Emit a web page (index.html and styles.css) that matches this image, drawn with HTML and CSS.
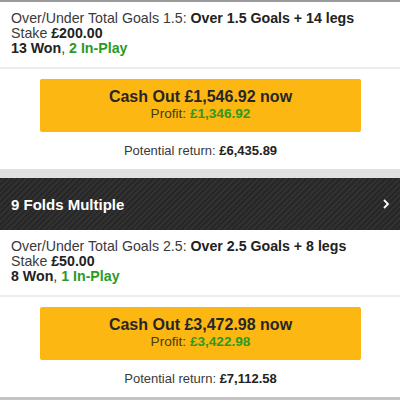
FILE: index.html
```html
<!DOCTYPE html>
<html lang="en">
<head>
<meta charset="utf-8">
<title>My Bets</title>
<link rel="stylesheet" href="styles.css">
</head>
<body>
<main class="bets">
  <section class="bet">
    <div class="legs">
      <div>Over/Under Total Goals 1.5: <b>Over 1.5 Goals + 14 legs</b></div>
      <div>Stake <b>£200.00</b></div>
      <div><b>13 Won</b>, <b class="live">2 In-Play</b></div>
    </div>
    <div class="cashout-wrap">
      <button class="cashout">
        <span class="cashout-amount">Cash Out £1,546.92 now</span>
        <span class="cashout-profit">Profit: <b class="live">£1,346.92</b></span>
      </button>
      <p class="return">Potential return: <b>£6,435.89</b></p>
    </div>
  </section>

  <div class="divider"></div>

  <header class="bet-title">
    <span>9 Folds Multiple</span>
    <svg class="chev" width="8" height="12" viewBox="0 0 8 12"><polyline points="2,2 6,6 2,10" fill="none" stroke="#fff" stroke-width="1.8"/></svg>
  </header>

  <section class="bet">
    <div class="legs">
      <div>Over/Under Total Goals 2.5: <b>Over 2.5 Goals + 8 legs</b></div>
      <div>Stake <b>£50.00</b></div>
      <div><b>8 Won</b>, <span class="live">1 In-Play</span></div>
    </div>
    <div class="cashout-wrap">
      <button class="cashout">
        <span class="cashout-amount">Cash Out £3,472.98 now</span>
        <span class="cashout-profit">Profit: <b class="live">£3,422.98</b></span>
      </button>
      <p class="return">Potential return: <b>£7,112.58</b></p>
    </div>
  </section>
</main>
</body>
</html>
```

FILE: styles.css
```css
* { box-sizing: border-box; }

html, body {
  margin: 0;
  padding: 0;
  background: #fff;
}

body {
  font-family: "Liberation Sans", Arial, sans-serif;
  color: #3a3a3a;
  font-size: 14px;
  width: 400px;
  height: 400px;
  overflow: hidden;
}

.bets {
  border-top: 2px solid #9a9a9a;
  border-bottom: 3px solid #c4c4c4;
  height: 400px;
  display: flex;
  flex-direction: column;
}

b { color: #222; }
.live { color: #2c9a22; font-weight: bold; }

.legs {
  padding: 9px 11px 11px;
  font-size: 14.2px;
  line-height: 15px;
  border-bottom: 2px solid #ececee;
}

.cashout-wrap {
  padding: 10px 39px 0 40px;
  display: flex;
  flex-direction: column;
  align-items: stretch;
}

.cashout {
  height: 53px;
  border: none;
  border-radius: 2px;
  background: #fdb713;
  font-family: inherit;
  display: flex;
  flex-direction: column;
  align-items: center;
  justify-content: center;
  padding: 0 0 2px;
  cursor: pointer;
}

.cashout-amount {
  font-size: 16px;
  font-weight: bold;
  color: #262626;
  line-height: 19px;
}

.cashout-profit {
  font-size: 13.6px;
  color: #4a3b10;
  line-height: 16px;
}

.return {
  margin: 0;
  padding: 11px 0 10px;
  text-align: center;
  font-size: 13px;
  line-height: 16px;
  color: #3a3a3a;
}

.divider {
  height: 9px;
  background: #e0e0e0;
}

.bet-title {
  height: 52px;
  display: flex;
  align-items: center;
  justify-content: space-between;
  padding: 0 10px 0 11px;
  color: #fff;
  font-weight: bold;
  font-size: 15px;
  background-color: #272727;
  background-image: repeating-linear-gradient(135deg, #272727 0 2px, #313131 2px 4px);
}
```
